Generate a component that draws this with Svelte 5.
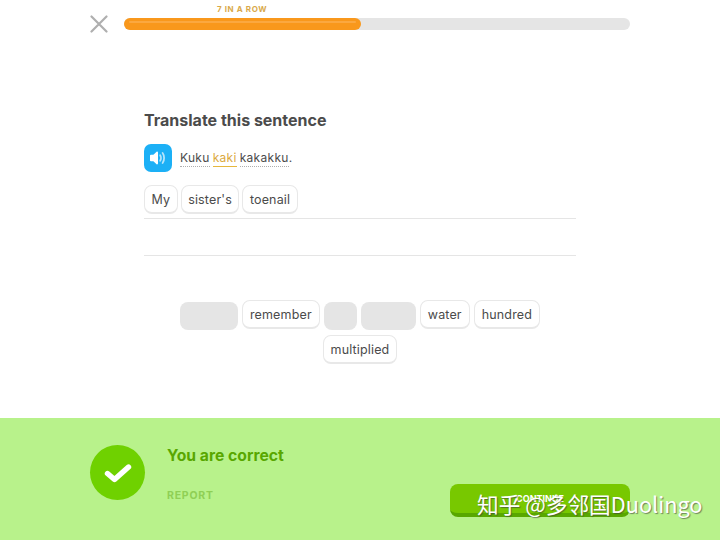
<script>
  const answer = ["My", "sister's", "toenail"];
  const bank = [
    { word: "", width: 58 },
    { word: "remember" },
    { word: "", width: 33 },
    { word: "", width: 55 },
    { word: "water" },
    { word: "hundred" },
    { word: "multiplied" },
  ];
</script>

<div class="page">
  <header class="top">
    <button class="close" aria-label="Close">
      <svg width="18" height="18" viewBox="0 0 18 18">
        <path d="M1.5 1.5 L16.5 16.5 M16.5 1.5 L1.5 16.5" stroke="#afafaf" stroke-width="2.2" stroke-linecap="round" fill="none" />
      </svg>
    </button>
    <div class="track">
      <span class="streak">7 IN A ROW</span>
      <div class="fill"><div class="shine"></div></div>
    </div>
  </header>

  <main class="lesson">
    <h1>Translate this sentence</h1>
    <div class="prompt">
      <div class="speaker">
        <svg width="18" height="16" viewBox="0 0 18 16">
          <path d="M1 5.5 C1 5 1.4 4.7 2 4.7 H4.4 L7.6 1.8 C8.2 1.3 9 1.7 9 2.4 V13.6 C9 14.3 8.2 14.7 7.6 14.2 L4.4 11.3 H2 C1.4 11.3 1 11 1 10.5 Z" fill="#fff" />
          <path d="M11.2 5.2 C12.2 6.6 12.2 9.4 11.2 10.8 M13.6 3 C15.6 5.6 15.6 10.4 13.6 13" stroke="#b5e4fb" stroke-width="1.8" stroke-linecap="round" fill="none" />
        </svg>
      </div>
      <p class="sentence">
        <span class="hint">Kuku</span>
        <span class="hint new">kaki</span>
        <span class="hint">kakakku</span><span class="stop">.</span>
      </p>
    </div>

    <div class="answer-line first">
      {#each answer as word}
        <span class="chip">{word}</span>
      {/each}
    </div>
    <div class="answer-line"></div>

    <div class="bank">
      {#each bank as item}
        {#if item.word}
          <span class="chip">{item.word}</span>
        {:else}
          <span class="used" style="width: {item.width}px"></span>
        {/if}
      {/each}
    </div>
  </main>

  <footer class="result">
    <div class="badge">
      <svg width="30" height="24" viewBox="0 0 30 24">
        <path d="M4.5 12.5 L11.5 18.5 L25.5 6" stroke="#fff" stroke-width="5.4" stroke-linecap="round" stroke-linejoin="round" fill="none" />
      </svg>
    </div>
    <div class="verdict">
      <h2>You are correct</h2>
      <span class="report">REPORT</span>
    </div>
    <button class="continue">CONTINUE</button>
    <span class="watermark">知乎 @多邻国Duolingo</span>
  </footer>
</div>

<style>
  :global(body) {
    margin: 0;
    background: #fff;
  }

  .page {
    width: 720px;
    height: 540px;
    display: flex;
    flex-direction: column;
    overflow: hidden;
    font-family: "Inter", "Noto Sans", sans-serif;
    color: #4b4b4b;
  }

  .top {
    display: flex;
    align-items: center;
    gap: 16px;
    padding: 14px 90px 0;
    height: 20px;
  }

  .close {
    all: unset;
    width: 18px;
    height: 18px;
    display: flex;
  }

  .track {
    position: relative;
    flex: 1;
    height: 12px;
    border-radius: 6px;
    background: #e5e5e5;
  }

  .fill {
    width: 237px;
    height: 12px;
    border-radius: 6px;
    background: #f9981c;
    padding: 3px 5px 0;
    box-sizing: border-box;
  }

  .shine {
    height: 2px;
    border-radius: 1px;
    background: #fba840;
  }

  .streak {
    position: absolute;
    left: 93px;
    top: -14px;
    font-size: 8px;
    font-weight: 700;
    letter-spacing: 0.6px;
    color: #d9a94a;
    white-space: nowrap;
  }

  .lesson {
    flex: 1;
    padding: 75px 144px 0;
  }

  h1 {
    margin: 0;
    font-size: 16px;
    line-height: 22px;
    font-weight: 700;
    color: #4b4b4b;
  }

  .prompt {
    display: flex;
    align-items: center;
    gap: 8px;
    margin-top: 13px;
  }

  .speaker {
    width: 28px;
    height: 28px;
    border-radius: 7px;
    background: #1cb0f6;
    display: flex;
    align-items: center;
    justify-content: center;
  }

  .sentence {
    margin: 0;
    display: flex;
    gap: 3px;
    font-size: 12px;
    line-height: 17px;
    letter-spacing: 0.3px;
    color: #4b4b4b;
  }

  .stop {
    margin-left: -3px;
  }

  .hint {
    border-bottom: 1px dotted #afafaf;
  }

  .hint.new {
    color: #dba93e;
    border-bottom: 1px solid #e6b73e;
  }

  .answer-line {
    height: 36px;
    border-bottom: 1px solid #e5e5e5;
    display: flex;
    gap: 3px;
    align-items: flex-start;
  }

  .answer-line.first {
    height: 32.5px;
    margin-top: 13px;
  }

  .answer-line .chip {
    padding: 0 6.5px;
  }

  .chip {
    box-sizing: border-box;
    height: 29px;
    padding: 0 7px;
    display: flex;
    align-items: center;
    border: 1.5px solid #e8e8e8;
    border-bottom-width: 2.5px;
    border-radius: 8px;
    background: #fff;
    font-size: 12.5px;
    letter-spacing: 0.15px;
    color: #4b4b4b;
    white-space: nowrap;
  }

  .used {
    height: 28px;
    margin-top: 2px;
    border-radius: 8px;
    background: #e5e5e5;
  }

  .bank {
    display: flex;
    flex-wrap: wrap;
    justify-content: center;
    gap: 5px 4px;
    margin-top: 44.5px;
  }

  .result {
    position: relative;
    height: 122px;
    box-sizing: border-box;
    background: #b8f28b;
    display: flex;
    align-items: flex-start;
    padding: 27px 90px 0;
  }

  .badge {
    width: 55px;
    height: 55px;
    border-radius: 50%;
    background: #6fd100;
    display: flex;
    align-items: center;
    justify-content: center;
  }

  .verdict {
    margin-left: 22px;
    display: flex;
    flex-direction: column;
  }

  h2 {
    margin: 0;
    padding-top: 1px;
    font-size: 15.7px;
    line-height: 20px;
    font-weight: 700;
    color: #58a700;
  }

  .report {
    margin-top: 23px;
    font-size: 10.5px;
    font-weight: 700;
    letter-spacing: 0.8px;
    color: #8fcf55;
  }

  .continue {
    all: unset;
    box-sizing: border-box;
    margin-left: auto;
    margin-top: 39px;
    width: 180px;
    height: 33px;
    border-radius: 8px;
    border-bottom: 4px solid #58a700;
    background: #78c800;
    color: #fff;
    font-size: 9px;
    font-weight: 700;
    text-align: center;
    line-height: 29px;
  }

  .watermark {
    position: absolute;
    left: 477px;
    top: 71px;
    font-family: "Noto Sans CJK SC", "Noto Sans", sans-serif;
    font-size: 21.7px;
    line-height: 30px;
    color: #fff;
    text-shadow: 1px 1px 1px rgba(60, 60, 60, 0.6);
    white-space: nowrap;
  }
</style>
